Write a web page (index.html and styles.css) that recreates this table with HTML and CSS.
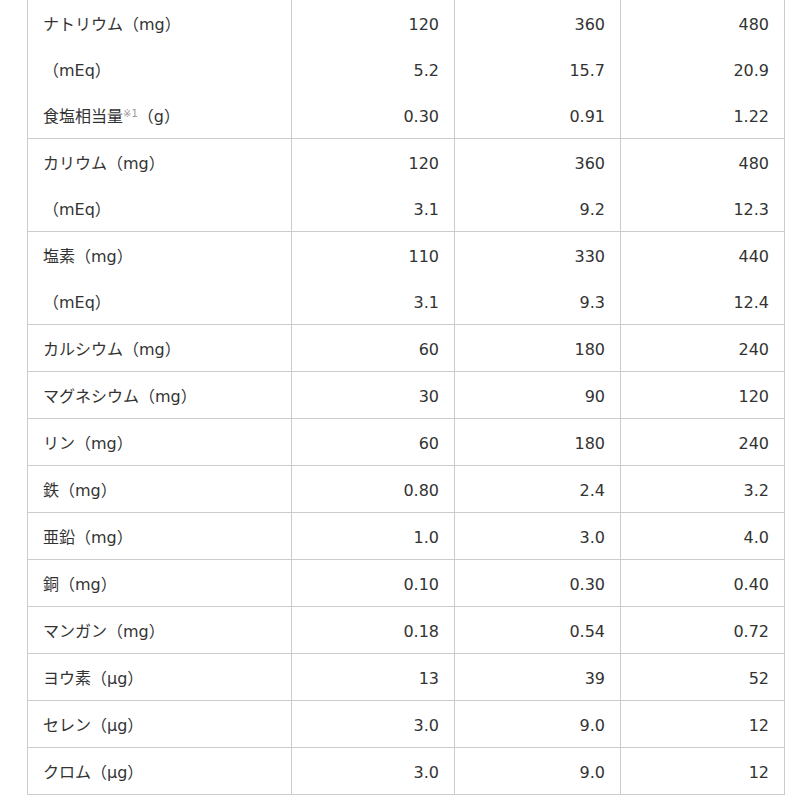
FILE: index.html
```html
<!DOCTYPE html>
<html lang="ja">
<head>
<meta charset="utf-8">
<title>栄養成分</title>
<link rel="stylesheet" href="styles.css">
</head>
<body>
<div class="wrap">
<table class="nutri">
  <colgroup>
    <col class="c-name">
    <col class="c-v1">
    <col class="c-v2">
    <col class="c-v3">
  </colgroup>
  <tbody>
    <tr>
      <td class="name"><div class="ln">ナトリウム（mg）</div><div class="ln">（mEq）</div><div class="ln">食塩相当量<sup class="note">※1</sup>（g）</div></td>
      <td class="num"><div class="ln">120</div><div class="ln">5.2</div><div class="ln">0.30</div></td>
      <td class="num"><div class="ln">360</div><div class="ln">15.7</div><div class="ln">0.91</div></td>
      <td class="num"><div class="ln">480</div><div class="ln">20.9</div><div class="ln">1.22</div></td>
    </tr>
    <tr>
      <td class="name"><div class="ln">カリウム（mg）</div><div class="ln">（mEq）</div></td>
      <td class="num"><div class="ln">120</div><div class="ln">3.1</div></td>
      <td class="num"><div class="ln">360</div><div class="ln">9.2</div></td>
      <td class="num"><div class="ln">480</div><div class="ln">12.3</div></td>
    </tr>
    <tr>
      <td class="name"><div class="ln">塩素（mg）</div><div class="ln">（mEq）</div></td>
      <td class="num"><div class="ln">110</div><div class="ln">3.1</div></td>
      <td class="num"><div class="ln">330</div><div class="ln">9.3</div></td>
      <td class="num"><div class="ln">440</div><div class="ln">12.4</div></td>
    </tr>
    <tr>
      <td class="name"><div class="ln">カルシウム（mg）</div></td>
      <td class="num"><div class="ln">60</div></td>
      <td class="num"><div class="ln">180</div></td>
      <td class="num"><div class="ln">240</div></td>
    </tr>
    <tr>
      <td class="name"><div class="ln">マグネシウム（mg）</div></td>
      <td class="num"><div class="ln">30</div></td>
      <td class="num"><div class="ln">90</div></td>
      <td class="num"><div class="ln">120</div></td>
    </tr>
    <tr>
      <td class="name"><div class="ln">リン（mg）</div></td>
      <td class="num"><div class="ln">60</div></td>
      <td class="num"><div class="ln">180</div></td>
      <td class="num"><div class="ln">240</div></td>
    </tr>
    <tr>
      <td class="name"><div class="ln">鉄（mg）</div></td>
      <td class="num"><div class="ln">0.80</div></td>
      <td class="num"><div class="ln">2.4</div></td>
      <td class="num"><div class="ln">3.2</div></td>
    </tr>
    <tr>
      <td class="name"><div class="ln">亜鉛（mg）</div></td>
      <td class="num"><div class="ln">1.0</div></td>
      <td class="num"><div class="ln">3.0</div></td>
      <td class="num"><div class="ln">4.0</div></td>
    </tr>
    <tr>
      <td class="name"><div class="ln">銅（mg）</div></td>
      <td class="num"><div class="ln">0.10</div></td>
      <td class="num"><div class="ln">0.30</div></td>
      <td class="num"><div class="ln">0.40</div></td>
    </tr>
    <tr>
      <td class="name"><div class="ln">マンガン（mg）</div></td>
      <td class="num"><div class="ln">0.18</div></td>
      <td class="num"><div class="ln">0.54</div></td>
      <td class="num"><div class="ln">0.72</div></td>
    </tr>
    <tr>
      <td class="name"><div class="ln">ヨウ素（µg）</div></td>
      <td class="num"><div class="ln">13</div></td>
      <td class="num"><div class="ln">39</div></td>
      <td class="num"><div class="ln">52</div></td>
    </tr>
    <tr>
      <td class="name"><div class="ln">セレン（µg）</div></td>
      <td class="num"><div class="ln">3.0</div></td>
      <td class="num"><div class="ln">9.0</div></td>
      <td class="num"><div class="ln">12</div></td>
    </tr>
    <tr>
      <td class="name"><div class="ln">クロム（µg）</div></td>
      <td class="num"><div class="ln">3.0</div></td>
      <td class="num"><div class="ln">9.0</div></td>
      <td class="num"><div class="ln">12</div></td>
    </tr>
  </tbody>
</table>
</div>
</body>
</html>
```

FILE: styles.css
```css
html, body {
  margin: 0;
  padding: 0;
  background: #ffffff;
}

body {
  font-family: "DejaVu Sans", "Noto Sans CJK JP", sans-serif;
  font-size: 16px;
  color: #333333;
}

.wrap {
  padding-left: 27px;
}

.nutri {
  border-collapse: separate;
  border-spacing: 0;
  table-layout: fixed;
  width: 758px;
  border-left: 1px solid #cccccc;
}

.c-name { width: 264px; }
.c-v1 { width: 163px; }
.c-v2 { width: 166px; }
.c-v3 { width: 164px; }

.nutri td {
  padding: 0 15px;
  border-right: 1px solid #cccccc;
  border-bottom: 1px solid #cccccc;
  vertical-align: top;
}

.ln {
  height: 46px;
  line-height: 50px;
  white-space: nowrap;
  overflow: hidden;
}

.name {
  text-align: left;
}

.num {
  text-align: right;
}

.note {
  font-size: 10px;
  color: #999999;
  vertical-align: 5px;
  line-height: 0;
}
```
